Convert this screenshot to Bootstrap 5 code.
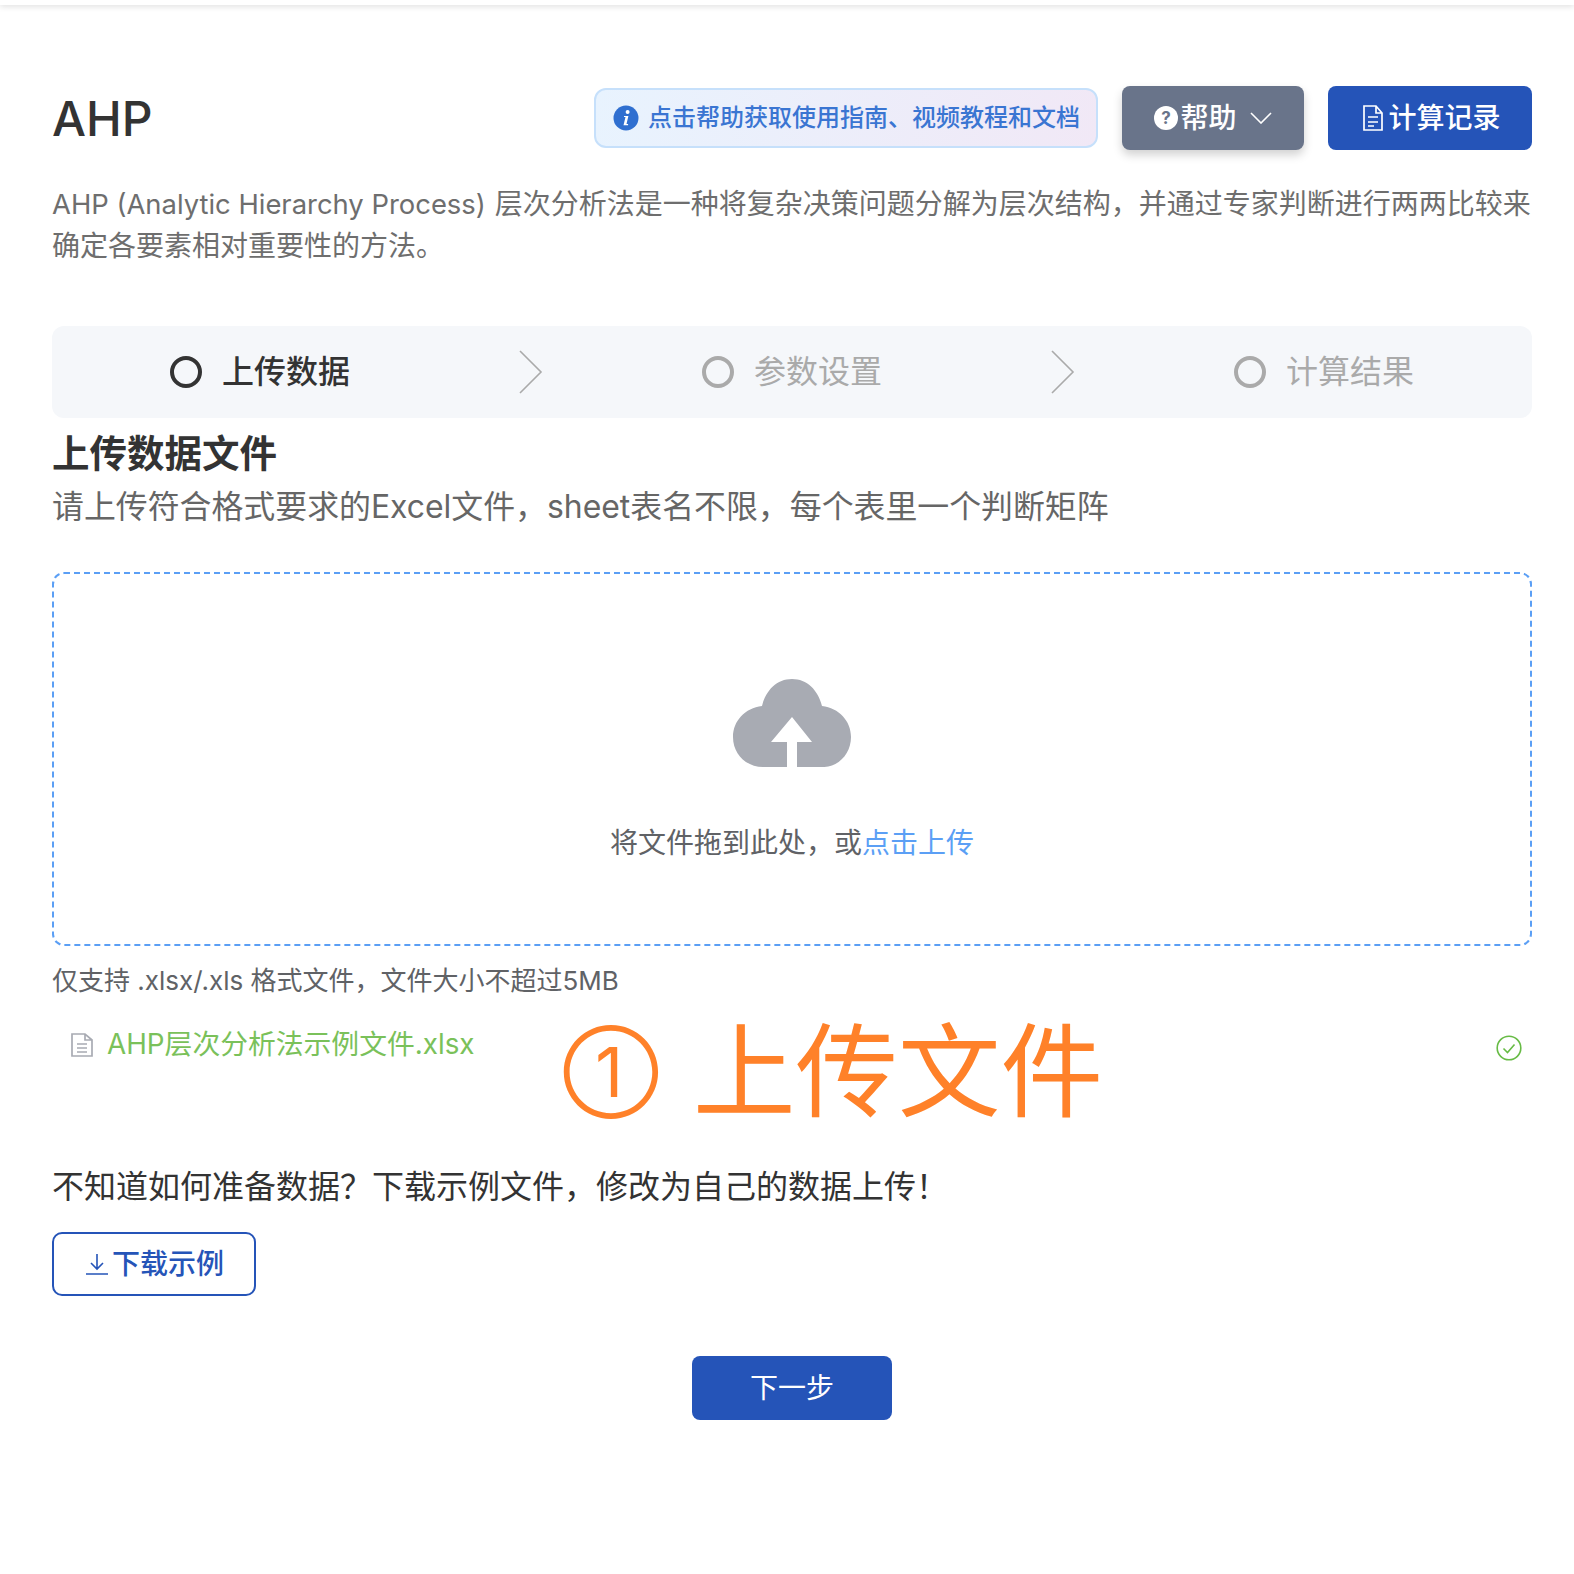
<!DOCTYPE html>
<html lang="zh-CN">
<head>
<meta charset="utf-8">
<title>AHP</title>
<link href="https://cdn.jsdelivr.net/npm/bootstrap@5.3.0/dist/css/bootstrap.min.css" rel="stylesheet">
<style>
html,body{height:1574px;overflow:hidden}
body{font-family:Inter,"Noto Sans CJK SC",sans-serif;color:#333;background:#fff}
.topshade{height:5px;background:#fff;box-shadow:0 1px 6px rgba(0,0,0,.16)}
.pagewrap{position:relative;padding:81px 42px 0 52px}
.hdr{height:64px}
.apptitle{font-size:48px;font-weight:500;color:#333;margin:2px 0 0;line-height:64px}
.tip-pill{height:60px;width:504px;border:2px solid #c6e0fb;border-radius:12px;background:linear-gradient(100deg,#e8f3fe,#f1e8f6);color:#3a75d2;font-size:24px;font-weight:500;padding-left:17px;gap:9px;margin-right:24px}
.hbtn{height:64px;font-size:28px;font-weight:500;border:0;border-radius:8px;color:#fff;gap:2px;line-height:1}
.hbtn:hover,.hbtn:focus{color:#fff}
.hbtn-help{width:182px;background:#69748a;box-shadow:0 5px 10px rgba(0,0,0,.18);margin-right:24px}
.hbtn-rec{width:204px;background:#2554b8;gap:5px;padding:0 0 0 4px}
.chev{margin-left:11px}
.descr{font-size:28px;line-height:42px;color:#6e6e6e;margin:33px 0 0}
.dline{white-space:nowrap;gap:9px}
.latin{font-size:27.4px}
.stepbar{height:92px;background:#f5f7fa;border-radius:12px;margin-top:59px;padding-left:118px}
.stepcell{flex:0 0 532px;font-size:32px;color:#aaa}
.stepcell.on{color:#333;font-weight:500}
.stepcell.last{flex:0 0 auto}
.stepdot{width:32px;height:32px;border:4px solid #aaa;border-radius:50%;margin-right:20px}
.on .stepdot{border-color:#333}
.steparrow{margin-left:auto;margin-right:159px}
.upt{font-size:37.5px;font-weight:700;color:#333;margin:15px 0 0;line-height:42px}
.ups{font-size:31.9px;color:#666;margin:9px 0 0;line-height:46px}
.dropz{height:374px;border:2px dashed #5b9ff5;border-radius:12px;margin-top:42px;padding-top:105px}
.dropt{font-size:28px;color:#606266;margin-top:56px;line-height:40px}
.dropt span{color:#5b9ff5}
.filetip{font-size:26px;color:#606266;margin-top:16px;line-height:38px}
.filerow{height:40px;margin-top:25px;padding:0 10px 0 19px;color:#7ac15a;font-size:27.8px;gap:14px}
.okicon{margin-left:auto;margin-top:5px}
.orangenote{position:absolute;left:563px;top:1007px;height:120px;color:#ff8129;white-space:nowrap;gap:34px}
.onum{font-size:69px;line-height:120px}
.otxt{font-size:102.5px;line-height:120px}
.ask{font-size:32px;color:#333;margin:99px 0 0;line-height:46px}
.dlbtn{width:204px;height:64px;border:2px solid #2554b8;border-radius:10px;color:#2554b8;font-size:28px;font-weight:500;background:#fff;margin-top:22px;gap:2px;padding:0}
.nextrow{margin-top:60px}
.nextbtn{width:200px;height:64px;background:#2554b8;color:#fff;font-size:28px;border:0;border-radius:8px}
.nextbtn:hover{background:#2554b8;color:#fff}
</style>
</head>
<body>
<div class="topshade"></div>
<div class="pagewrap">
  <div class="d-flex align-items-center hdr">
    <h1 class="apptitle me-auto">AHP</h1>
    <div class="d-flex align-items-center tip-pill">
      <svg width="26" height="26" viewBox="0 0 26 26"><circle cx="13" cy="13" r="12.5" fill="#2f6fd0"/><circle cx="14.6" cy="7" r="2" fill="#fff"/><path d="M11 11h4.4l-1.9 8h1.6v1.2h-4.6l2-8.1H11z" fill="#fff"/></svg>
      <span>点击帮助获取使用指南、视频教程和文档</span>
    </div>
    <button class="btn hbtn hbtn-help d-flex align-items-center justify-content-center">
      <svg width="24" height="24" viewBox="0 0 24 24"><circle cx="12" cy="12" r="12" fill="#fff"/><text x="12" y="18" text-anchor="middle" font-size="17" font-weight="700" font-family="Inter" fill="#69748a">?</text></svg>
      <span>帮助</span>
      <svg class="chev" width="22" height="12" viewBox="0 0 22 12"><path d="M1 1l10 10L21 1" fill="none" stroke="#fff" stroke-width="1.6"/></svg>
    </button>
    <button class="btn hbtn hbtn-rec d-flex align-items-center justify-content-center">
      <svg width="20" height="26" viewBox="0 0 20 26"><path d="M1 1h12l6 7v17H1zM13 1v7h6M5 12h10M5 17h10M5 21h6" fill="none" stroke="#fff" stroke-width="1.7"/></svg>
      <span>计算记录</span>
    </button>
  </div>
  <div class="descr">
    <div class="d-flex dline"><span class="latin">AHP (Analytic Hierarchy Process)</span><span>层次分析法是一种将复杂决策问题分解为层次结构，并通过专家判断进行两两比较来</span></div>
    <div>确定各要素相对重要性的方法。</div>
  </div>
  <div class="d-flex align-items-center stepbar">
    <div class="d-flex align-items-center stepcell on"><span class="stepdot"></span><span>上传数据</span>
      <svg class="steparrow" width="24" height="44" viewBox="0 0 24 44"><path d="M1 1l21 21L1 43" fill="none" stroke="#aaa" stroke-width="1.6"/></svg></div>
    <div class="d-flex align-items-center stepcell"><span class="stepdot"></span><span>参数设置</span>
      <svg class="steparrow" width="24" height="44" viewBox="0 0 24 44"><path d="M1 1l21 21L1 43" fill="none" stroke="#aaa" stroke-width="1.6"/></svg></div>
    <div class="d-flex align-items-center stepcell last"><span class="stepdot"></span><span>计算结果</span></div>
  </div>
  <h2 class="upt">上传数据文件</h2>
  <p class="ups">请上传符合格式要求的Excel文件，sheet表名不限，每个表里一个判断矩阵</p>
  <div class="dropz text-center">
    <svg width="118" height="88" viewBox="0 0 118 88"><path d="M30 88C13 88 0 75 0 58c0-16 12-29 29-31C33 11 44 0 59 0s26 11 30 27c17 2 29 15 29 31 0 17-13 31-30 30H64V63h15L59 38 38 63h16v25z" fill="#a8abb3"/></svg>
    <div class="dropt">将文件拖到此处，或<span>点击上传</span></div>
  </div>
  <div class="filetip">仅支持 .xlsx/.xls 格式文件，文件大小不超过5MB</div>
  <div class="d-flex align-items-center filerow">
    <svg width="22" height="24" viewBox="0 0 22 24"><path d="M1 1h13l7 6v16H1zM14 1v6h7M6 11h10M6 15h10M6 19h10" fill="none" stroke="#a8abb3" stroke-width="1.7"/></svg>
    <span>AHP层次分析法示例文件.xlsx</span>
    <svg class="okicon" width="26" height="26" viewBox="0 0 26 26"><circle cx="13" cy="13" r="11.8" fill="none" stroke="#67bb45" stroke-width="1.6"/><path d="M7.5 13.5l4 4 7-8" fill="none" stroke="#67bb45" stroke-width="1.6"/></svg>
  </div>
  <div class="orangenote d-flex align-items-center"><span class="onum">①</span><span class="otxt">上传文件</span></div>
  <p class="ask">不知道如何准备数据？下载示例文件，修改为自己的数据上传！</p>
  <button class="btn dlbtn d-flex align-items-center justify-content-center">
    <svg width="26" height="24" viewBox="0 0 26 24"><path d="M13 2v15M7 11l6 6 6-6M2 22h22" fill="none" stroke="#2554b8" stroke-width="1.6"/></svg>
    <span>下载示例</span>
  </button>
  <div class="d-flex justify-content-center nextrow">
    <button class="btn nextbtn">下一步</button>
  </div>
</div>
<script src="https://cdn.jsdelivr.net/npm/bootstrap@5.3.0/dist/js/bootstrap.bundle.min.js"></script>
</body>
</html>
